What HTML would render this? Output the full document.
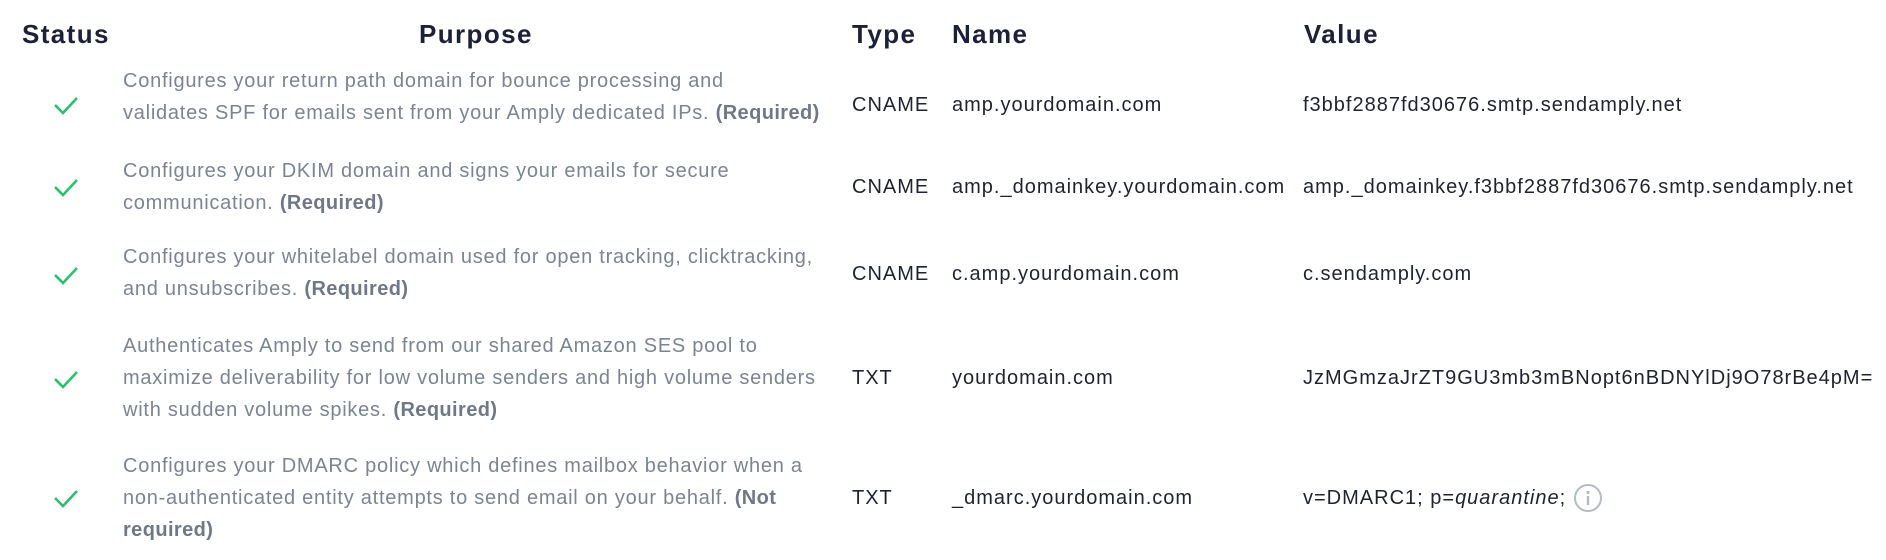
<!DOCTYPE html>
<html><head><meta charset="utf-8"><style>
body{margin:0;width:1886px;height:560px;background:#fff;position:relative;overflow:hidden;font-family:"Liberation Sans",sans-serif;}
.h{position:absolute;top:18px;font-size:26px;letter-spacing:1.4px;font-weight:bold;color:#1c2038;line-height:32px;white-space:nowrap}
.p{position:absolute;left:123px;font-size:20px;letter-spacing:0.75px;line-height:32px;color:#7b8494;white-space:nowrap}
.p b{color:#6f7888;letter-spacing:0.4px}
.c{position:absolute;font-size:20px;letter-spacing:1px;line-height:32px;color:#1f2330;white-space:nowrap}
.ck{position:absolute;left:52px;width:28px;height:22px}
</style></head><body>
<div class="h" style="left:22px">Status</div>
<div class="h" style="left:419px">Purpose</div>
<div class="h" style="left:852px">Type</div>
<div class="h" style="left:952px">Name</div>
<div class="h" style="left:1304px">Value</div>

<svg class="ck" style="top:94px" viewBox="0 0 28 22"><path d="M3 11 L11 19 L25 4" fill="none" stroke="#2bbf6a" stroke-width="2.6"/></svg>
<div class="p" style="top:65px">Configures your return path domain for bounce processing and<br>validates SPF for emails sent from your Amply dedicated IPs. <b>(Required)</b></div>
<div class="c" style="left:852px;top:89px">CNAME</div>
<div class="c" style="left:952px;top:89px">amp.yourdomain.com</div>
<div class="c" style="left:1303px;top:89px">f3bbf2887fd30676.smtp.sendamply.net</div>

<svg class="ck" style="top:176px" viewBox="0 0 28 22"><path d="M3 11 L11 19 L25 4" fill="none" stroke="#2bbf6a" stroke-width="2.6"/></svg>
<div class="p" style="top:155px">Configures your DKIM domain and signs your emails for secure<br>communication. <b>(Required)</b></div>
<div class="c" style="left:852px;top:171px">CNAME</div>
<div class="c" style="left:952px;top:171px">amp._domainkey.yourdomain.com</div>
<div class="c" style="left:1303px;top:171px">amp._domainkey.f3bbf2887fd30676.smtp.sendamply.net</div>

<svg class="ck" style="top:264px" viewBox="0 0 28 22"><path d="M3 11 L11 19 L25 4" fill="none" stroke="#2bbf6a" stroke-width="2.6"/></svg>
<div class="p" style="top:241px">Configures your whitelabel domain used for open tracking, clicktracking,<br>and unsubscribes. <b>(Required)</b></div>
<div class="c" style="left:852px;top:258px">CNAME</div>
<div class="c" style="left:952px;top:258px">c.amp.yourdomain.com</div>
<div class="c" style="left:1303px;top:258px">c.sendamply.com</div>

<svg class="ck" style="top:368px" viewBox="0 0 28 22"><path d="M3 11 L11 19 L25 4" fill="none" stroke="#2bbf6a" stroke-width="2.6"/></svg>
<div class="p" style="top:330px">Authenticates Amply to send from our shared Amazon SES pool to<br>maximize deliverability for low volume senders and high volume senders<br>with sudden volume spikes. <b>(Required)</b></div>
<div class="c" style="left:852px;top:362px">TXT</div>
<div class="c" style="left:952px;top:362px">yourdomain.com</div>
<div class="c" style="left:1303px;top:362px">JzMGmzaJrZT9GU3mb3mBNopt6nBDNYlDj9O78rBe4pM=</div>

<svg class="ck" style="top:487px" viewBox="0 0 28 22"><path d="M3 11 L11 19 L25 4" fill="none" stroke="#2bbf6a" stroke-width="2.6"/></svg>
<div class="p" style="top:450px">Configures your DMARC policy which defines mailbox behavior when a<br>non-authenticated entity attempts to send email on your behalf. <b>(Not</b><br><b>required)</b></div>
<div class="c" style="left:852px;top:482px">TXT</div>
<div class="c" style="left:952px;top:482px">_dmarc.yourdomain.com</div>
<div class="c" style="left:1303px;top:482px">v=DMARC1; p=<i>quarantine</i>;</div>
<svg style="position:absolute;left:1573px;top:483px" width="30" height="30" viewBox="0 0 30 30"><circle cx="15" cy="15" r="13" fill="none" stroke="#b4bac6" stroke-width="2"/><circle cx="15" cy="9.5" r="1.6" fill="#b4bac6"/><rect x="13.8" y="13" width="2.4" height="9" fill="#b4bac6"/></svg>
</body></html>
